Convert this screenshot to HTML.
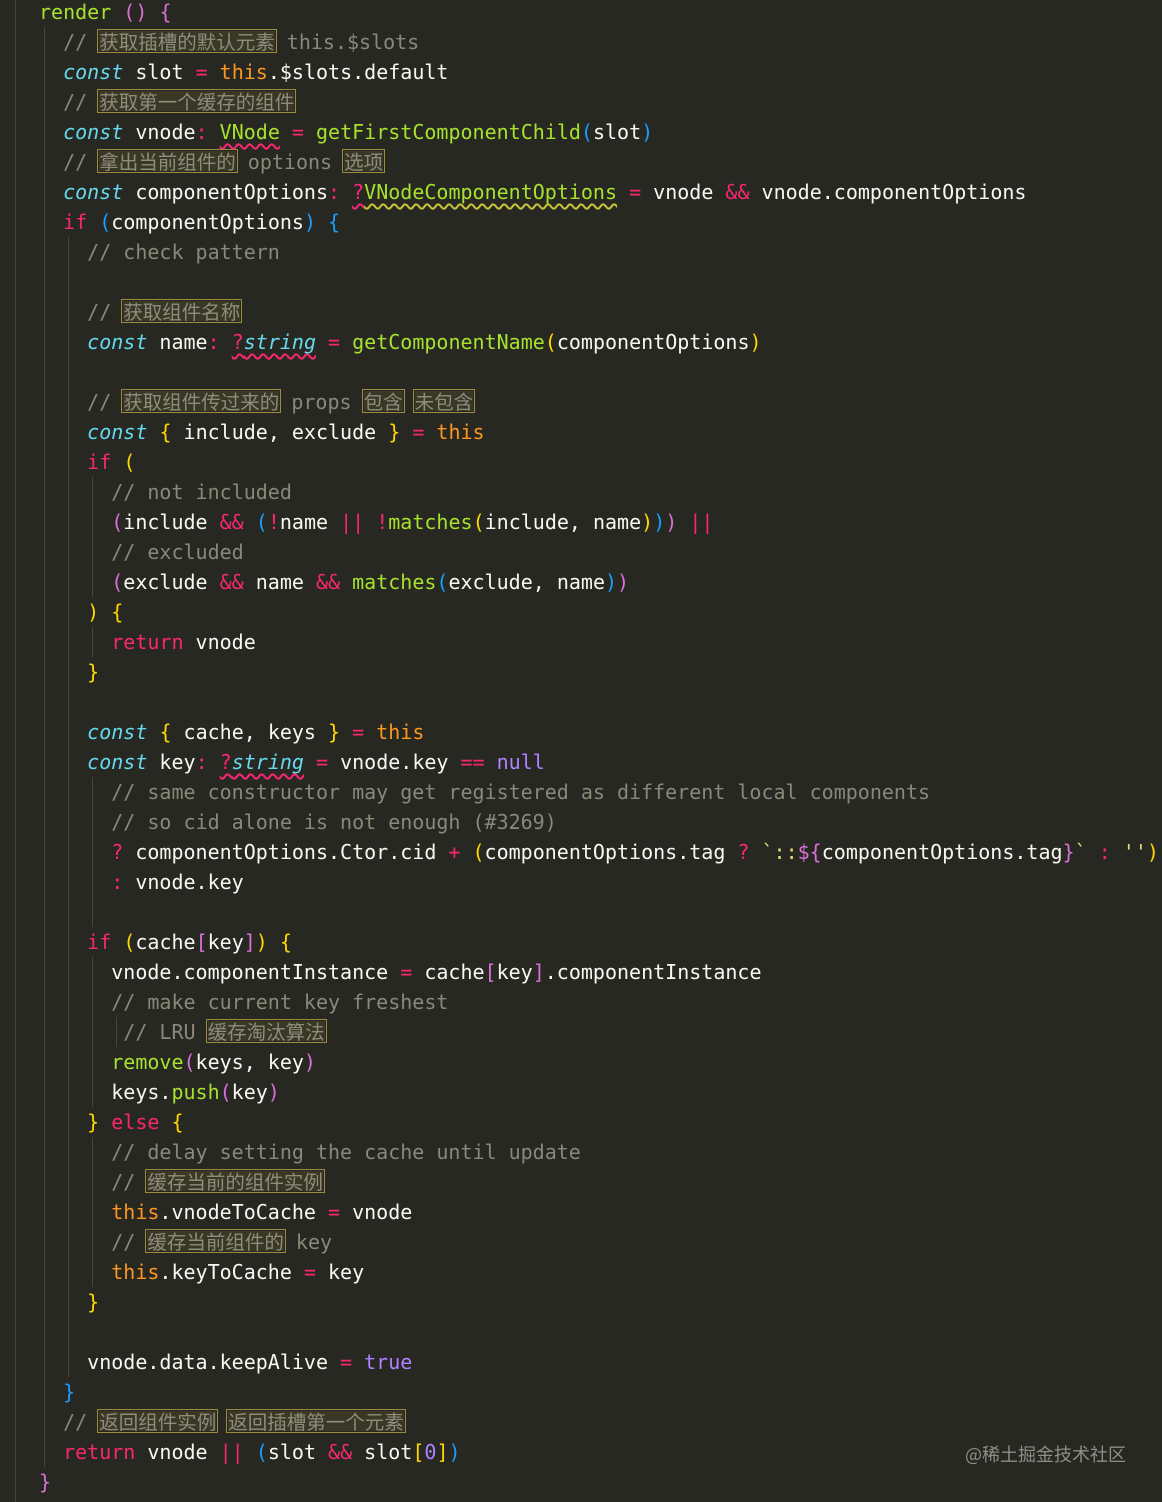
<!DOCTYPE html>
<html><head><meta charset="utf-8"><style>
html,body{margin:0;padding:0;background:#272822;width:1162px;height:1502px;overflow:hidden}
pre{margin:0;position:absolute;left:39px;top:-3px;font-family:"DejaVu Sans Mono","Liberation Mono","Noto Sans CJK SC",monospace;font-size:20px;line-height:30px;color:#f8f8f2;white-space:pre}
.k{color:#66d9ef;font-style:italic}
.p{color:#f92672}.o{color:#fd971f}.g{color:#a6e22e}.c{color:#8a8878}
.Y{color:#ffd700}.M{color:#da70d6}.B{color:#179fff}.n{color:#ae81ff}.s{color:#e6db74}
.h{font-family:"Noto Sans CJK SC",sans-serif;font-size:19.5px;line-height:20px;display:inline-block;vertical-align:baseline;color:#8f8c7c;background:#3a3726;outline:1px solid #9c8a3e;outline-offset:1px}
.wr{text-decoration:underline wavy #f92672;text-underline-offset:4px}
.wy{text-decoration:underline wavy #c8c43a;text-underline-offset:4px}
.gd{position:absolute;width:1px;background:#454640}
.wm{position:absolute;left:965px;top:1441px;font-family:"Noto Sans CJK SC",sans-serif;font-size:18px;color:#8e8e88}
</style></head><body>
<div class="gd" style="left:15px;top:0;height:1502px"></div>
<div class="gd" style="left:44px;top:27px;height:1440px"></div>
<div class="gd" style="left:68px;top:237px;height:1140px"></div>
<div class="gd" style="left:92px;top:477px;height:120px"></div>
<div class="gd" style="left:92px;top:627px;height:30px"></div>
<div class="gd" style="left:92px;top:777px;height:150px"></div>
<div class="gd" style="left:92px;top:957px;height:150px"></div>
<div class="gd" style="left:116px;top:1017px;height:30px"></div>
<div class="gd" style="left:92px;top:1137px;height:150px"></div>
<pre><span class="g">render</span> <span class="M">()</span> <span class="M">{</span>
  <span class="c">// <span class="h">获取插槽的默认元素</span> this.$slots</span>
  <span class="k">const</span> slot <span class="p">=</span> <span class="o">this</span>.$slots.default
  <span class="c">// <span class="h">获取第一个缓存的组件</span></span>
  <span class="k">const</span> vnode<span class="p">:</span> <span class="g wr">VNode</span> <span class="p">=</span> <span class="g">getFirstComponentChild</span><span class="B">(</span>slot<span class="B">)</span>
  <span class="c">// <span class="h">拿出当前组件的</span> options <span class="h">选项</span></span>
  <span class="k">const</span> componentOptions<span class="p">:</span> <span class="p wr">?</span><span class="g wy">VNodeComponentOptions</span> <span class="p">=</span> vnode <span class="p">&amp;&amp;</span> vnode.componentOptions
  <span class="p">if</span> <span class="B">(</span>componentOptions<span class="B">)</span> <span class="B">{</span>
    <span class="c">// check pattern</span>

    <span class="c">// <span class="h">获取组件名称</span></span>
    <span class="k">const</span> name<span class="p">:</span> <span class="wr"><span class="p">?</span><span class="k">string</span></span> <span class="p">=</span> <span class="g">getComponentName</span><span class="Y">(</span>componentOptions<span class="Y">)</span>

    <span class="c">// <span class="h">获取组件传过来的</span> props <span class="h">包含</span> <span class="h">未包含</span></span>
    <span class="k">const</span> <span class="Y">{</span> include, exclude <span class="Y">}</span> <span class="p">=</span> <span class="o">this</span>
    <span class="p">if</span> <span class="Y">(</span>
      <span class="c">// not included</span>
      <span class="M">(</span>include <span class="p">&amp;&amp;</span> <span class="B">(</span><span class="p">!</span>name <span class="p">||</span> <span class="p">!</span><span class="g">matches</span><span class="Y">(</span>include, name<span class="Y">)</span><span class="B">)</span><span class="M">)</span> <span class="p">||</span>
      <span class="c">// excluded</span>
      <span class="M">(</span>exclude <span class="p">&amp;&amp;</span> name <span class="p">&amp;&amp;</span> <span class="g">matches</span><span class="B">(</span>exclude, name<span class="B">)</span><span class="M">)</span>
    <span class="Y">)</span> <span class="Y">{</span>
      <span class="p">return</span> vnode
    <span class="Y">}</span>

    <span class="k">const</span> <span class="Y">{</span> cache, keys <span class="Y">}</span> <span class="p">=</span> <span class="o">this</span>
    <span class="k">const</span> key<span class="p">:</span> <span class="wr"><span class="p">?</span><span class="k">string</span></span> <span class="p">=</span> vnode.key <span class="p">==</span> <span class="n">null</span>
      <span class="c">// same constructor may get registered as different local components</span>
      <span class="c">// so cid alone is not enough (#3269)</span>
      <span class="p">?</span> componentOptions.Ctor.cid <span class="p">+</span> <span class="Y">(</span>componentOptions.tag <span class="p">?</span> <span class="s">`::</span><span class="M">${</span>componentOptions.tag<span class="M">}</span><span class="s">`</span> <span class="p">:</span> <span class="s">''</span><span class="Y">)</span>
      <span class="p">:</span> vnode.key

    <span class="p">if</span> <span class="Y">(</span>cache<span class="M">[</span>key<span class="M">]</span><span class="Y">)</span> <span class="Y">{</span>
      vnode.componentInstance <span class="p">=</span> cache<span class="M">[</span>key<span class="M">]</span>.componentInstance
      <span class="c">// make current key freshest</span>
       <span class="c">// LRU <span class="h">缓存淘汰算法</span></span>
      <span class="g">remove</span><span class="M">(</span>keys, key<span class="M">)</span>
      keys.<span class="g">push</span><span class="M">(</span>key<span class="M">)</span>
    <span class="Y">}</span> <span class="p">else</span> <span class="Y">{</span>
      <span class="c">// delay setting the cache until update</span>
      <span class="c">// <span class="h">缓存当前的组件实例</span></span>
      <span class="o">this</span>.vnodeToCache <span class="p">=</span> vnode
      <span class="c">// <span class="h">缓存当前组件的</span> key</span>
      <span class="o">this</span>.keyToCache <span class="p">=</span> key
    <span class="Y">}</span>

    vnode.data.keepAlive <span class="p">=</span> <span class="n">true</span>
  <span class="B">}</span>
  <span class="c">// <span class="h">返回组件实例</span> <span class="h">返回插槽第一个元素</span></span>
  <span class="p">return</span> vnode <span class="p">||</span> <span class="B">(</span>slot <span class="p">&amp;&amp;</span> slot<span class="Y">[</span><span class="n">0</span><span class="Y">]</span><span class="B">)</span>
<span class="M">}</span></pre>
<div class="wm">@稀土掘金技术社区</div>
</body></html>
